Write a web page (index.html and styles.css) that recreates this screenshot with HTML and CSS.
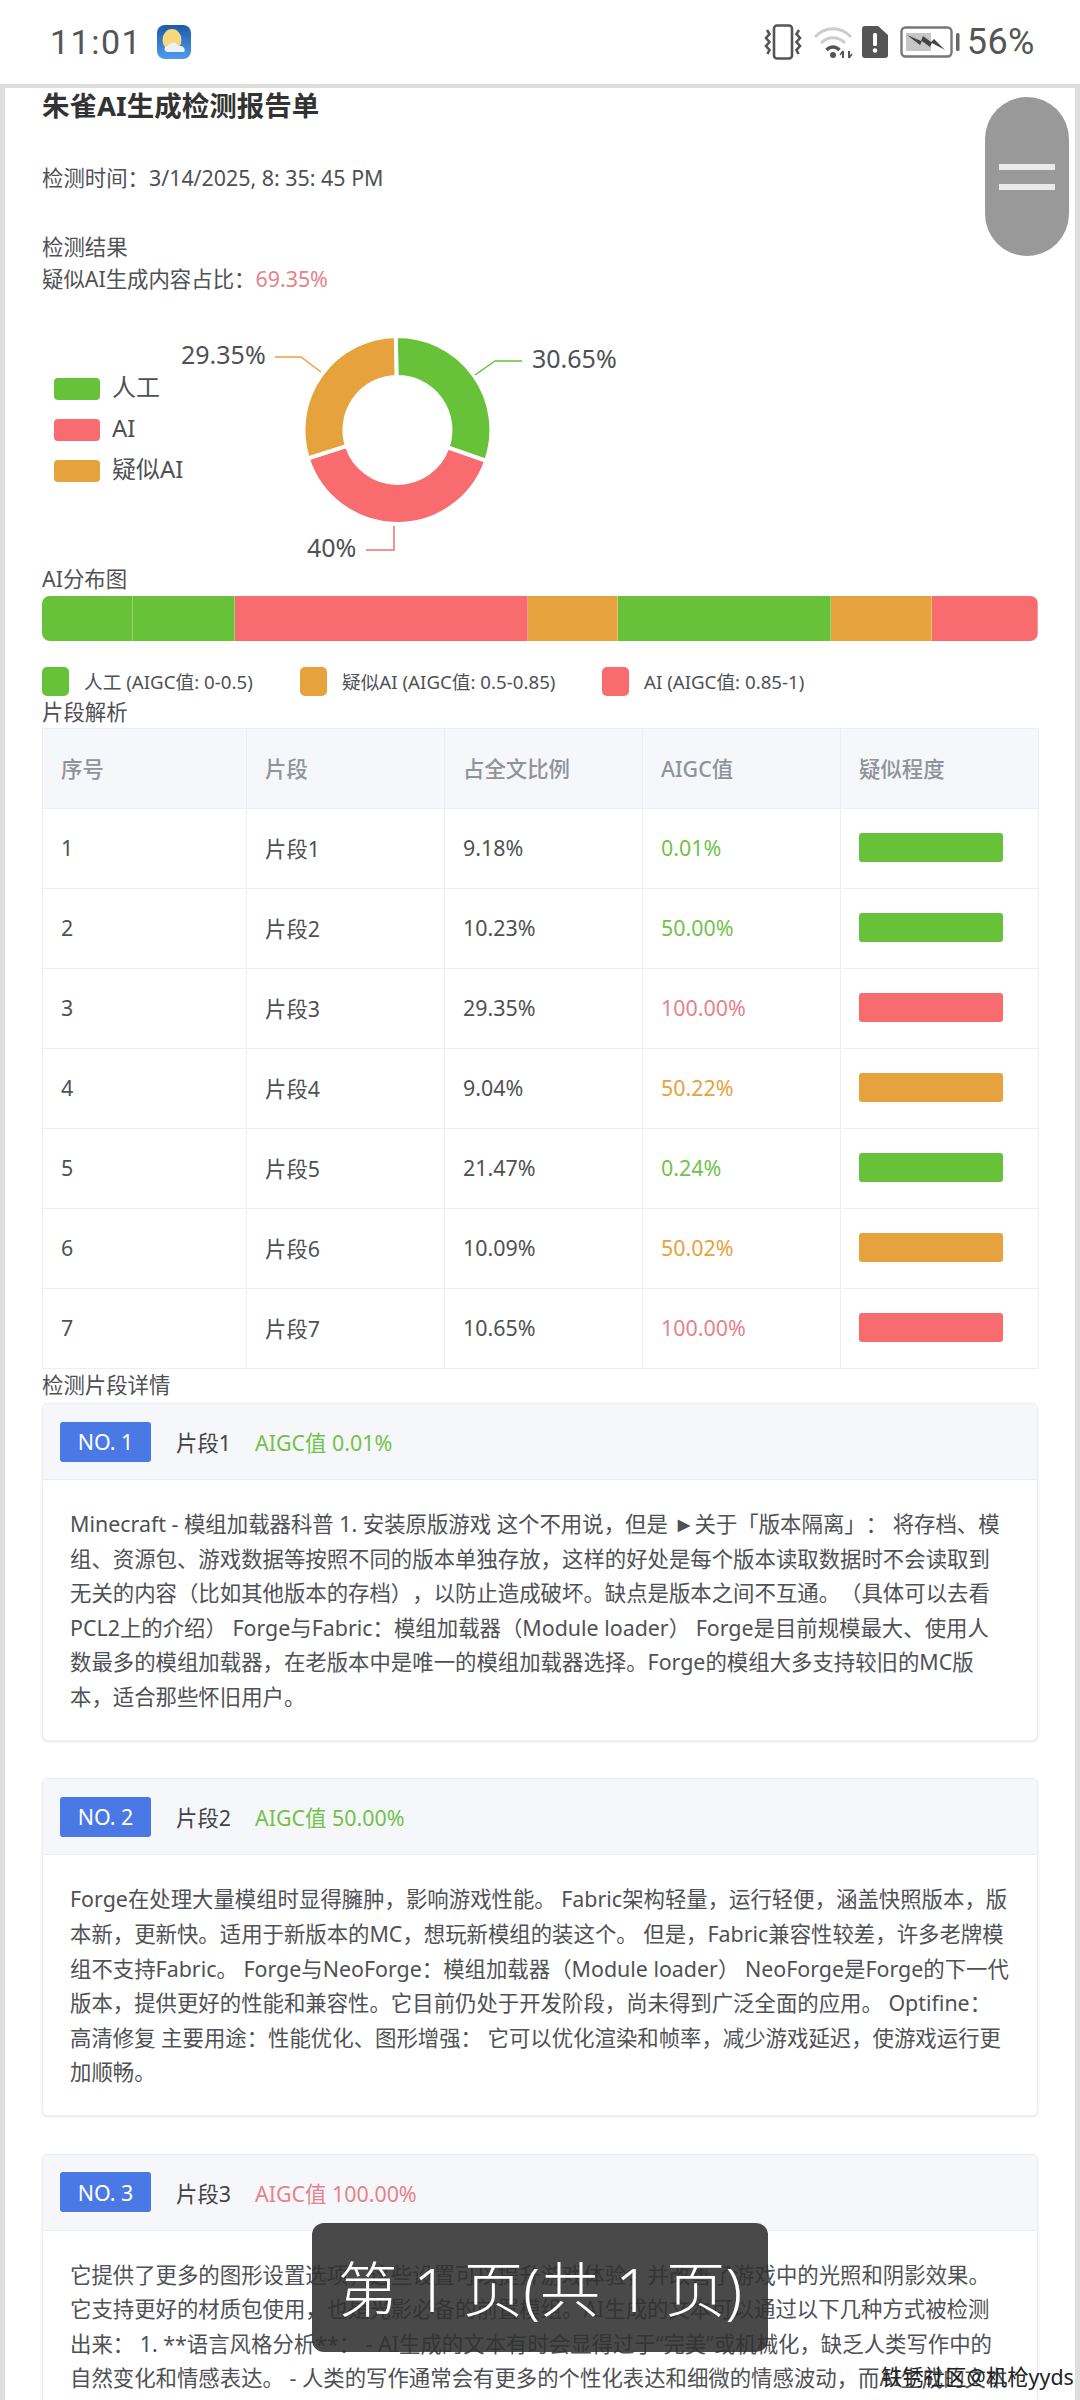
FILE: index.html
```
<!DOCTYPE html>
<html lang="zh-CN">
<head>
<meta charset="utf-8">
<title>朱雀AI生成检测报告单</title>
<link rel="stylesheet" href="styles.css">
</head>
<body>
<header class="status">
  <div class="status-left">
    <span class="clock">11:01</span>
    <svg class="weather" viewBox="0 0 34 34" width="34" height="34">
      <defs><linearGradient id="sky" x1="0" y1="0" x2="0" y2="1"><stop offset="0" stop-color="#1c5aa8"/><stop offset="1" stop-color="#4f9cec"/></linearGradient></defs>
      <rect width="34" height="34" rx="8" fill="url(#sky)"/>
      <ellipse cx="15" cy="15" rx="9.500" ry="11" fill="#f8d77c"/>
      <path d="M11 27c-2 0-3.500-1.300-3.500-3s1.500-3 3.500-3c.8-2.200 2.800-3.600 5-3.600 2.700 0 4.800 1.700 5.500 4 .6-.3 1.200-.4 1.800-.4 2.600 0 4.400 1.900 4.400 4 0 .7-.2 1.400-.5 2z" fill="#e9f1fb"/>
    </svg>
  </div>
  <div class="status-right">
    <svg class="ic-vib" viewBox="0 0 38 36" width="38" height="36" fill="none" stroke="#555" stroke-width="2.600">
      <rect x="10" y="1.500" width="18" height="33" rx="3"/>
      <path d="M3 6l2.500 4-3.500 4 3.500 4-3.500 4 3.500 4-2 4M35 6l-2.500 4 3.500 4-3.500 4 3.500 4-3.500 4 2 4"/>
    </svg>
    <svg class="ic-wifi" viewBox="0 0 40 34" width="40" height="34" fill="none">
      <path d="M2 12C12 1 28 1 38 12" stroke="#ccc" stroke-width="3"/>
      <path d="M8 18c7-7 17-7 24 0" stroke="#ccc" stroke-width="3"/>
      <path d="M13.500 25c4-4 9-4 13 0" stroke="#555" stroke-width="3.500"/>
      <circle cx="20" cy="30" r="3" fill="#555"/>
      <path d="M30 26v7M36 26v7" stroke="#555" stroke-width="2"/>
      <path d="M27 30l3-4M39 29l-3 4" stroke="#555" stroke-width="1.500"/>
    </svg>
    <svg class="ic-alert" viewBox="0 0 26 32" width="26" height="32">
      <path d="M3 0h13l10 9v20a3 3 0 0 1-3 3H3a3 3 0 0 1-3-3V3a3 3 0 0 1 3-3z" fill="#555"/>
      <rect x="11" y="7" width="4" height="13" rx="1.500" fill="#fff"/>
      <circle cx="13" cy="24.500" r="2.300" fill="#fff"/>
    </svg>
    <svg class="ic-batt" viewBox="0 0 60 32" width="60" height="32">
      <rect x="1.500" y="1.500" width="50" height="29" rx="4" fill="none" stroke="#777" stroke-width="2.400"/>
      <rect x="6" y="7" width="25" height="18" fill="#c6c6c6"/>
      <rect x="56" y="7" width="3.500" height="18" rx="1.500" fill="#666"/>
      <path d="M7 9l14 6 2-5 8 6 3-3 11 11-13-7-2 4-8-6-2 4z" fill="#444"/>
    </svg>
    <span class="percent">56%</span>
  </div>
</header>

<main class="viewer">
  <div class="report">
    <h1 class="title">朱雀AI生成检测报告单</h1>
    <p class="meta">检测时间：3/14/2025, 8: 35: 45 PM</p>
    <section class="result">
      <p class="label">检测结果</p>
      <p class="label">疑似AI生成内容占比：<span class="t-red">69.35%</span></p>
    </section>

    <svg class="chart" viewBox="42 295 996 270" width="996" height="270">
      <rect x="54" y="378" width="46" height="22" rx="4" class="f-green"/>
      <rect x="54" y="419" width="46" height="22" rx="4" class="f-red"/>
      <rect x="54" y="460" width="46" height="22" rx="4" class="f-orange"/>
      <text x="112" y="396" class="c-text">人工</text>
      <text x="112" y="437" class="c-text">AI</text>
      <text x="112" y="478" class="c-text">疑似AI</text>
      <path class="f-green seg" d="M395.800 336A94 94 0 0 1 486.200 460.900L447.500 447.400A53 53 0 0 0 396.500 377Z"/>
      <path class="f-red seg" d="M486.200 460.900A94 94 0 0 1 307.800 458.300L346.900 445.900A53 53 0 0 0 447.500 447.400Z"/>
      <path class="f-orange seg" d="M307.800 458.300A94 94 0 0 1 395.800 336L396.500 377A53 53 0 0 0 346.900 445.900Z"/>
      <path class="l-green" d="M475 375L495 361H522"/>
      <path class="l-orange" d="M321 372L301 357H275"/>
      <path class="l-red" d="M394 526V550H366"/>
      <text x="532" y="368" class="c-num">30.65%</text>
      <text x="181" y="364" class="c-num">29.35%</text>
      <text x="307" y="557" class="c-num">40%</text>
    </svg>

    <p class="label dist-title">AI分布图</p>
    <div class="dist">
      <span class="b-green" style="width:9.18%"></span>
      <span class="b-green" style="width:10.23%"></span>
      <span class="b-red" style="width:29.35%"></span>
      <span class="b-orange" style="width:9.04%"></span>
      <span class="b-green" style="width:21.47%"></span>
      <span class="b-orange" style="width:10.09%"></span>
      <span class="b-red" style="width:10.65%"></span>
    </div>
    <ul class="keys">
      <li class="key key-a"><i class="b-green"></i>人工 (AIGC值: 0-0.5)</li>
      <li class="key key-b"><i class="b-orange"></i>疑似AI (AIGC值: 0.5-0.85)</li>
      <li class="key"><i class="b-red"></i>AI (AIGC值: 0.85-1)</li>
    </ul>

    <p class="label">片段解析</p>
    <table class="segs">
      <colgroup><col class="c1"><col class="c2"><col class="c2"><col class="c2"><col class="c2"></colgroup>
      <thead><tr><th>序号</th><th>片段</th><th>占全文比例</th><th>AIGC值</th><th>疑似程度</th></tr></thead>
      <tbody>
        <tr><td>1</td><td>片段1</td><td>9.18%</td><td class="t-green">0.01%</td><td><div class="lvl b-green"></div></td></tr>
        <tr><td>2</td><td>片段2</td><td>10.23%</td><td class="t-green">50.00%</td><td><div class="lvl b-green"></div></td></tr>
        <tr><td>3</td><td>片段3</td><td>29.35%</td><td class="t-red">100.00%</td><td><div class="lvl b-red"></div></td></tr>
        <tr><td>4</td><td>片段4</td><td>9.04%</td><td class="t-orange">50.22%</td><td><div class="lvl b-orange"></div></td></tr>
        <tr><td>5</td><td>片段5</td><td>21.47%</td><td class="t-green">0.24%</td><td><div class="lvl b-green"></div></td></tr>
        <tr><td>6</td><td>片段6</td><td>10.09%</td><td class="t-orange">50.02%</td><td><div class="lvl b-orange"></div></td></tr>
        <tr><td>7</td><td>片段7</td><td>10.65%</td><td class="t-red">100.00%</td><td><div class="lvl b-red"></div></td></tr>
      </tbody>
    </table>

    <p class="label detail-title">检测片段详情</p>

    <article class="card">
      <div class="card-head"><span class="badge">NO. 1</span><span class="name">片段1</span><span class="t-green">AIGC值 0.01%</span></div>
      <div class="card-body">Minecraft - 模组加载器科普 1. 安装原版游戏 这个不用说，但是 ►关于「版本隔离」： 将存档、模<br>组、资源包、游戏数据等按照不同的版本单独存放，这样的好处是每个版本读取数据时不会读取到<br>无关的内容（比如其他版本的存档），以防止造成破坏。缺点是版本之间不互通。（具体可以去看<br>PCL2上的介绍） Forge与Fabric：模组加载器（Module loader） Forge是目前规模最大、使用人<br>数最多的模组加载器，在老版本中是唯一的模组加载器选择。Forge的模组大多支持较旧的MC版<br>本，适合那些怀旧用户。</div>
    </article>

    <article class="card">
      <div class="card-head"><span class="badge">NO. 2</span><span class="name">片段2</span><span class="t-green">AIGC值 50.00%</span></div>
      <div class="card-body">Forge在处理大量模组时显得臃肿，影响游戏性能。 Fabric架构轻量，运行轻便，涵盖快照版本，版<br>本新，更新快。适用于新版本的MC，想玩新模组的装这个。 但是，Fabric兼容性较差，许多老牌模<br>组不支持Fabric。 Forge与NeoForge：模组加载器（Module loader） NeoForge是Forge的下一代<br>版本，提供更好的性能和兼容性。它目前仍处于开发阶段，尚未得到广泛全面的应用。 Optifine：<br>高清修复 主要用途：性能优化、图形增强： 它可以优化渲染和帧率，减少游戏延迟，使游戏运行更<br>加顺畅。</div>
    </article>

    <article class="card">
      <div class="card-head"><span class="badge">NO. 3</span><span class="name">片段3</span><span class="t-red">AIGC值 100.00%</span></div>
      <div class="card-body">它提供了更多的图形设置选项，这些设置可以提升游戏体验，并改善了游戏中的光照和阴影效果。<br>它支持更好的材质包使用，也是光影必备的前置模组。AI生成的文本可以通过以下几种方式被检测<br>出来： 1. **语言风格分析**： - AI生成的文本有时会显得过于“完美”或机械化，缺乏人类写作中的<br>自然变化和情感表达。 - 人类的写作通常会有更多的个性化表达和细微的情感波动，而AI生成的文本</div>
    </article>
  </div>

  <div class="handle"><span></span><span></span></div>
</main>

<div class="toast">第 1 页(共 1 页)</div>
<div class="watermark">铁锈社区@机枪yyds</div>
</body>
</html>
```

FILE: styles.css
```
* { box-sizing: border-box; }
html, body { margin: 0; padding: 0; }
body {
  width: 1080px;
  height: 2400px;
  overflow: hidden;
  position: relative;
  background: #fff;
  font-family: "Noto Sans", "Noto Sans CJK SC", sans-serif;
  color: #4f5155;
  text-spacing-trim: space-all;
}
p, h1, ul { margin: 0; padding: 0; }

/* status bar */
.status {
  height: 84px;
  padding: 0 45px 0 50px;
  display: flex;
  align-items: center;
  justify-content: space-between;
  color: #555;
}
.status-left { display: flex; align-items: center; gap: 15px; }
.clock { font-family: Roboto, sans-serif; font-size: 34px; letter-spacing: 1.500px; line-height: 40px; }
.weather { display: block; }
.status-right { display: flex; align-items: center; }
.status-right svg { display: block; }
.ic-wifi { margin-left: 11px; }
.ic-alert { margin-left: 9px; }
.ic-batt { margin-left: 12px; }
.percent { font-family: Roboto, sans-serif; font-size: 36px; line-height: 40px; margin-left: 7px; letter-spacing: .5px; }

/* viewer frame */
.viewer {
  position: relative;
  height: 2316px;
  border-top: 4px solid #dedede;
  border-left: 5px solid #dedede;
  border-right: 5px solid #dedede;
  overflow: hidden;
}
.report { padding: 0 37px; width: 1070px; }
.title { font-size: 27.500px; font-weight: 700; line-height: 36px; color: #333; }
.meta { margin-top: 39px; font-size: 21.400px; line-height: 30px; }
.result { margin-top: 38px; }
.label { font-size: 21.400px; line-height: 32px; }
.t-red { color: #e5838a; }
.t-green { color: #72c24a; }
.t-orange { color: #e6a23c; }

/* donut chart */
.chart { display: block; }
.c-text { font-size: 24px; fill: #4f5155; font-family: "Noto Sans", "Noto Sans CJK SC", sans-serif; }
.c-num { font-size: 25px; fill: #4f5155; font-family: "Noto Sans", "Noto Sans CJK SC", sans-serif; }
.f-green { fill: #67c23a; }
.f-red { fill: #f86c70; }
.f-orange { fill: #e6a23c; }
.seg { stroke: #fff; stroke-width: 4; stroke-linejoin: round; }
.l-green, .l-orange, .l-red { fill: none; stroke-width: 1.500; }
.l-green { stroke: #67c23a; }
.l-orange { stroke: #e6a23c; }
.l-red { stroke: #f86c70; }

/* distribution */
.dist-title { line-height: 28px; margin-bottom: 3px; }
.dist {
  width: 996px;
  height: 45px;
  display: flex;
  border-radius: 8px;
  overflow: hidden;
}
.dist span { display: block; height: 100%; box-shadow: inset -1px 0 rgba(255,255,255,.3); }
.b-green { background: #67c23a; }
.b-red { background: #f86c70; }
.b-orange { background: #e6a23c; }
.keys {
  list-style: none;
  margin-top: 26px;
  display: flex;
  height: 29px;
}
.key { display: flex; align-items: center; font-size: 18.700px; line-height: 29px; }
.key i { width: 27px; height: 29px; border-radius: 5px; margin-right: 15px; }
.key-a { width: 258px; }
.key-b { width: 302px; }

/* table */
.segs {
  width: 996px;
  border-collapse: collapse;
  table-layout: fixed;
  font-size: 21.400px;
}
.c1 { width: 204px; }
.c2 { width: 198px; }
.segs th, .segs td {
  height: 80px;
  padding: 0 18px 2px;
  border: 1px solid #ebeef5;
  text-align: left;
}
.segs th { background: #f5f7fa; color: #909399; font-weight: 500; }
.lvl { width: 144px; height: 29px; border-radius: 3px; }

.detail-title { line-height: 32px; margin-bottom: 2px; }

/* cards */
.card {
  width: 996px;
  margin-bottom: 37.400px;
  border: 1px solid #ebeef5;
  border-radius: 6px;
  box-shadow: 0 1px 3px rgba(0,0,0,.1);
  background: #fff;
}
.card-head {
  height: 76px;
  padding: 0 17px;
  display: flex;
  align-items: center;
  background: #f5f7fa;
  border-bottom: 1px solid #ebeef5;
  border-radius: 6px 6px 0 0;
  font-size: 21.400px;
}
.badge {
  width: 91px;
  height: 40px;
  margin-right: 25px;
  display: flex;
  align-items: center;
  justify-content: center;
  border-radius: 3px;
  background: #4a79e6;
  color: #fff;
}
.name { width: 79px; color: #444; }
.card-body {
  padding: 27px 27px 25.400px;
  font-size: 21.400px;
  line-height: 34.600px;
  white-space: nowrap;
}

/* side handle (overlay) */
.handle {
  position: absolute;
  left: 980px;
  top: 9px;
  width: 84px;
  height: 159px;
  border-radius: 42px;
  background: #999;
  display: flex;
  flex-direction: column;
  align-items: center;
  justify-content: center;
  gap: 14px;
}
.handle span { width: 56px; height: 6px; background: #eaeaea; }

/* toast + watermark overlays */
.toast {
  position: absolute;
  left: 312px;
  top: 2223px;
  width: 456px;
  height: 129px;
  padding-bottom: 3px;
  border-radius: 12px;
  background: rgba(48,48,48,.88);
  color: #fff;
  display: flex;
  align-items: center;
  justify-content: center;
  font-size: 60px;
  font-weight: 300;
  white-space: nowrap;
}
.watermark {
  position: absolute;
  left: 881px;
  top: 2362px;
  font-size: 21.400px;
  line-height: 30px;
  color: #222;
  white-space: nowrap;
}
```
